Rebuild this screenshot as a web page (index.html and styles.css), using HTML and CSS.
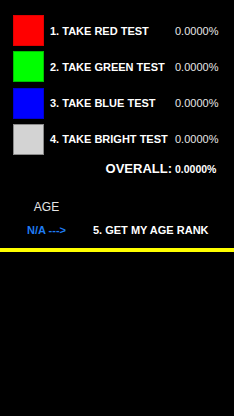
FILE: index.html
```html
<!DOCTYPE html>
<html>
<head>
<meta charset="utf-8">
<link rel="stylesheet" href="styles.css">
</head>
<body>
<div class="screen">
  <div class="tests">
    <div class="swatch red"></div><div class="label">1. TAKE RED TEST</div><div class="pct">0.0000%</div>
    <div class="swatch green"></div><div class="label">2. TAKE GREEN TEST</div><div class="pct">0.0000%</div>
    <div class="swatch blue"></div><div class="label">3. TAKE BLUE TEST</div><div class="pct">0.0000%</div>
    <div class="swatch bright"></div><div class="label">4. TAKE BRIGHT TEST</div><div class="pct">0.0000%</div>
  </div>
  <div class="overall">
    <div class="overall-label">OVERALL:</div>
    <div class="overall-value">0.0000%</div>
  </div>
  <div class="age-row">
    <div class="age-col">AGE</div>
  </div>
  <div class="rank-row">
    <div class="age-col na">N/A ---&gt;</div>
    <div class="rank">5. GET MY AGE RANK</div>
  </div>
  <div class="divider"></div>
</div>
</body>
</html>
```
FILE: styles.css
```css
html, body {
  margin: 0;
  padding: 0;
  background: #000;
}
.screen {
  width: 234px;
  height: 416px;
  background: #000;
  font-family: "Liberation Sans", Arial, sans-serif;
  color: #fff;
  overflow: hidden;
}
.tests {
  display: grid;
  grid-template-columns: 31px 119px auto;
  grid-auto-rows: 31px;
  column-gap: 6px;
  row-gap: 5.33px;
  padding: 15px 0 0 13px;
  align-items: center;
}
.swatch {
  width: 31px;
  height: 31px;
  box-sizing: border-box;
}
.red { background: #ff0000; border: 1px solid #e00000; }
.green { background: #00ff00; border: 1px solid #00c000; }
.blue { background: #0000ff; border: 1px solid #0000d0; }
.bright { background: #d3d3d3; border: 1px solid #8a8a8a; }
.label {
  font-weight: bold;
  font-size: 11px;
  white-space: nowrap;
  color: #fff;
}
.pct {
  font-size: 11px;
  color: #e6e6e6;
  white-space: nowrap;
}
.overall {
  display: flex;
  align-items: center;
  height: 28px;
}
.overall-label {
  width: 172px;
  text-align: right;
  font-weight: bold;
  font-size: 13px;
  color: #fff;
}
.overall-value {
  margin-left: 3px;
  font-weight: bold;
  font-size: 10.5px;
  color: #fff;
}
.age-row {
  display: flex;
  align-items: center;
  height: 15px;
  margin-top: 17px;
}
.age-col {
  width: 93px;
  text-align: center;
  font-size: 12px;
  color: #e6e6e6;
}
.rank-row {
  display: flex;
  align-items: center;
  height: 16px;
  margin-top: 7px;
}
.na {
  color: #1f7cf4;
  font-weight: bold;
  font-size: 11px;
}
.rank {
  font-weight: bold;
  font-size: 11px;
  color: #fff;
  white-space: nowrap;
}
.divider {
  height: 4px;
  margin-top: 10px;
  background: #ffff00;
}
```
